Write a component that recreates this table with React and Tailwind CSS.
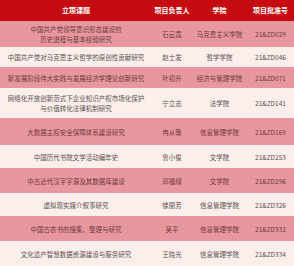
import React from "react";

const rows = [
  { t: ["中国共产党领导意识形态建设的", "历史进程与基本经验研究"], n: "石云霞", c: "马克思主义学院", id: "21&ZD029", h: "h-[26px]" },
  { t: ["中国共产党对马克思主义哲学的原创性贡献研究"], n: "赵士发", c: "哲学学院", id: "21&ZD046", h: "h-[20px]" },
  { t: ["新发展阶段伟大实践与发展经济学理论创新研究"], n: "叶初升", c: "经济与管理学院", id: "21&ZD071", h: "h-[21px]" },
  { t: ["网络化开放创新范式下企业知识产权市场化保护", "与价值转化法律机制研究"], n: "宁立志", c: "法学院", id: "21&ZD141", h: "h-[30px]" },
  { t: ["大数据主权安全保障体系建设研究"], n: "冉从敬", c: "信息管理学院", id: "21&ZD169", h: "h-[27px]" },
  { t: ["中国历代书院文学活动编年史"], n: "鲁小俊", c: "文学院", id: "21&ZD253", h: "h-[23px]" },
  { t: ["中古近代汉字字源及其数据库建设"], n: "邓福禄", c: "文学院", id: "21&ZD296", h: "h-[25px]" },
  { t: ["虚拟现实媒介叙事研究"], n: "徐丽芳", c: "信息管理学院", id: "21&ZD326", h: "h-[23px]" },
  { t: ["中国古农书的搜集、整理与研究"], n: "吴平", c: "信息管理学院", id: "21&ZD332", h: "h-[25px]" },
  { t: ["文化遗产智慧数据资源建设与服务研究"], n: "王晓光", c: "信息管理学院", id: "21&ZD334", h: "h-[25px]" },
];

export default function App() {
  return (
    <div
      className="w-[294px] h-[266px] overflow-hidden bg-[#fbeeeb]"
      style={{ fontFamily: '"Noto Sans CJK SC", "Noto Sans", sans-serif' }}
    >
      <div className="grid grid-cols-[152px_40px_55px_47px] h-[21px] bg-[#c50b10] text-white font-bold text-[7px] items-center text-center">
        <div>立项课题</div>
        <div>项目负责人</div>
        <div>学院</div>
        <div>项目批准号</div>
      </div>
      {rows.map((r, i) => {
        const pink = i % 2 === 0;
        return (
          <div
            key={r.id}
            className={`grid grid-cols-[152px_40px_55px_47px] ${r.h} items-center text-center text-[6.5px] leading-[10px] ${
              pink ? "bg-[#e8979e] text-[#6e3a3f]" : "bg-[#fbeeeb] text-[#5a5050]"
            }`}
          >
            <div className="flex flex-col items-center">
              {r.t.map((l) => (
                <span key={l}>{l}</span>
              ))}
            </div>
            <div>{r.n}</div>
            <div>{r.c}</div>
            <div className="whitespace-nowrap">{r.id}</div>
          </div>
        );
      })}
    </div>
  );
}
